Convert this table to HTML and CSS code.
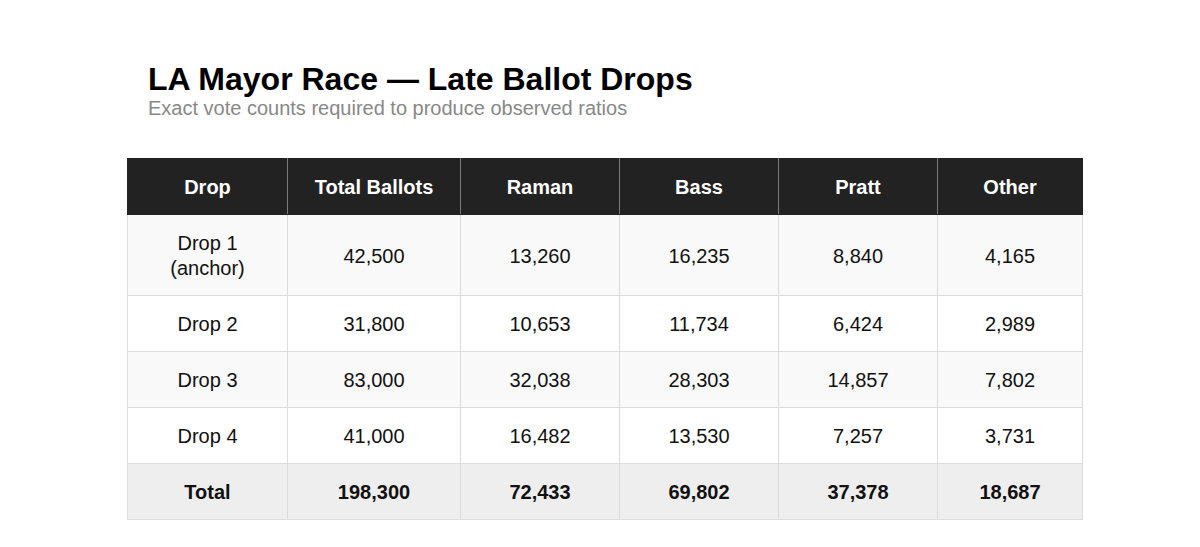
FILE: index.html
```html
<!DOCTYPE html>
<html lang="en">
<head>
<meta charset="utf-8">
<title>LA Mayor Race — Late Ballot Drops</title>
<link rel="stylesheet" href="styles.css">
</head>
<body>
<main class="page">
  <header class="heading">
    <h1 class="title">LA Mayor Race — Late Ballot Drops</h1>
    <p class="subtitle">Exact vote counts required to produce observed ratios</p>
  </header>
  <table class="drops">
    <colgroup>
      <col class="c1"><col class="c2"><col class="c3"><col class="c4"><col class="c5"><col class="c6">
    </colgroup>
    <thead>
      <tr><th>Drop</th><th>Total Ballots</th><th>Raman</th><th>Bass</th><th>Pratt</th><th>Other</th></tr>
    </thead>
    <tbody>
      <tr class="alt"><td>Drop 1<br>(anchor)</td><td>42,500</td><td>13,260</td><td>16,235</td><td>8,840</td><td>4,165</td></tr>
      <tr><td>Drop 2</td><td>31,800</td><td>10,653</td><td>11,734</td><td>6,424</td><td>2,989</td></tr>
      <tr class="alt"><td>Drop 3</td><td>83,000</td><td>32,038</td><td>28,303</td><td>14,857</td><td>7,802</td></tr>
      <tr><td>Drop 4</td><td>41,000</td><td>16,482</td><td>13,530</td><td>7,257</td><td>3,731</td></tr>
      <tr class="total"><td>Total</td><td>198,300</td><td>72,433</td><td>69,802</td><td>37,378</td><td>18,687</td></tr>
    </tbody>
  </table>
</main>
</body>
</html>
```

FILE: styles.css
```css
* { box-sizing: border-box; }
html, body { margin: 0; padding: 0; background: #fff; }
body {
  font-family: "Liberation Sans", Arial, Helvetica, sans-serif;
  color: #111;
}
.page {
  padding: 61px 0 0 127px;
}
.heading {
  padding-left: 21px;
  margin-bottom: 38px;
}
.title {
  margin: 0;
  font-size: 32px;
  line-height: 36px;
  font-weight: 700;
  color: #000;
}
.subtitle {
  margin: 0;
  font-size: 20px;
  line-height: 23px;
  color: #888;
}
.drops {
  border-collapse: collapse;
  table-layout: fixed;
  width: 955px;
  font-size: 20px;
}
.c1 { width: 160px; }
.c2 { width: 173px; }
.c3 { width: 159px; }
.c4 { width: 159px; }
.c5 { width: 159px; }
.c6 { width: 145px; }
.drops th, .drops td {
  text-align: center;
  vertical-align: middle;
  line-height: 25px;
  padding: 16px 8px 14px;
  border: 1px solid #dcdcdc;
}
.drops th {
  background: #222;
  color: #fff;
  font-weight: 700;
  border-color: #7a7a7a;
  border-top-color: #222;
  border-bottom-color: #222;
}
.drops th:first-child { border-left-color: #222; }
.drops th:last-child { border-right-color: #222; }
.drops tr.alt td { background: #f9f9f9; }
.drops tr.total td {
  background: #eeeeee;
  font-weight: 700;
}
```
